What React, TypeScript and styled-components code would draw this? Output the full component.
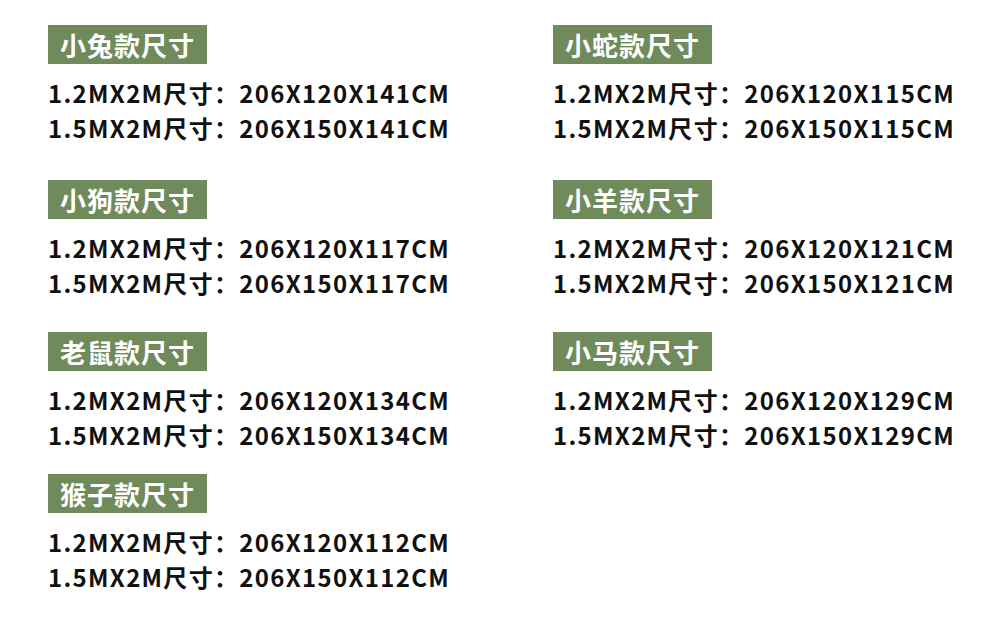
import styled, { createGlobalStyle } from 'styled-components';

const GlobalStyle = createGlobalStyle`
    html, body {
        margin: 0;
        padding: 0;
        background: #ffffff;
    }
    body {
        font-family: "Noto Sans CJK SC", "Noto Sans", sans-serif;
    }
`;

const Page = styled.div`
    width: 990px;
    height: 625px;
    box-sizing: border-box;
    padding: 25px 0 0 48px;
    display: grid;
    grid-template-columns: 505px 1fr;
    grid-template-rows: 155px 152px 142px auto;
`;

const Section = styled.div`
    display: flex;
    flex-direction: column;
    align-items: flex-start;
`;

const Label = styled.div`
    height: 39px;
    line-height: 39px;
    padding: 0 12px 0 12px;
    background: #6f8b5b;
    color: #ffffff;
    font-size: 26px;
    font-weight: 700;
    letter-spacing: 1px;
`;

const Lines = styled.div`
    margin-top: 11px;
`;

const Line = styled.div`
    font-size: 24px;
    line-height: 35px;
    font-weight: 700;
    color: #111111;
    letter-spacing: 1.3px;
    white-space: nowrap;
`;

interface ISize {
    name: string;
    height: number;
}

const sizes: ISize[] = [
    { name: "小兔", height: 141 },
    { name: "小蛇", height: 115 },
    { name: "小狗", height: 117 },
    { name: "小羊", height: 121 },
    { name: "老鼠", height: 134 },
    { name: "小马", height: 129 },
    { name: "猴子", height: 112 },
];

function App() {
    return (
        <>
            <GlobalStyle />
            <Page>
                {
                    sizes.map((size: ISize, key: number) => {
                        return (
                            <Section key={key}>
                                <Label>{size.name}款尺寸</Label>
                                <Lines>
                                    <Line>1.2MX2M尺寸：206X120X{size.height}CM</Line>
                                    <Line>1.5MX2M尺寸：206X150X{size.height}CM</Line>
                                </Lines>
                            </Section>
                        )
                    })
                }
            </Page>
        </>
    )
}

export default App;
